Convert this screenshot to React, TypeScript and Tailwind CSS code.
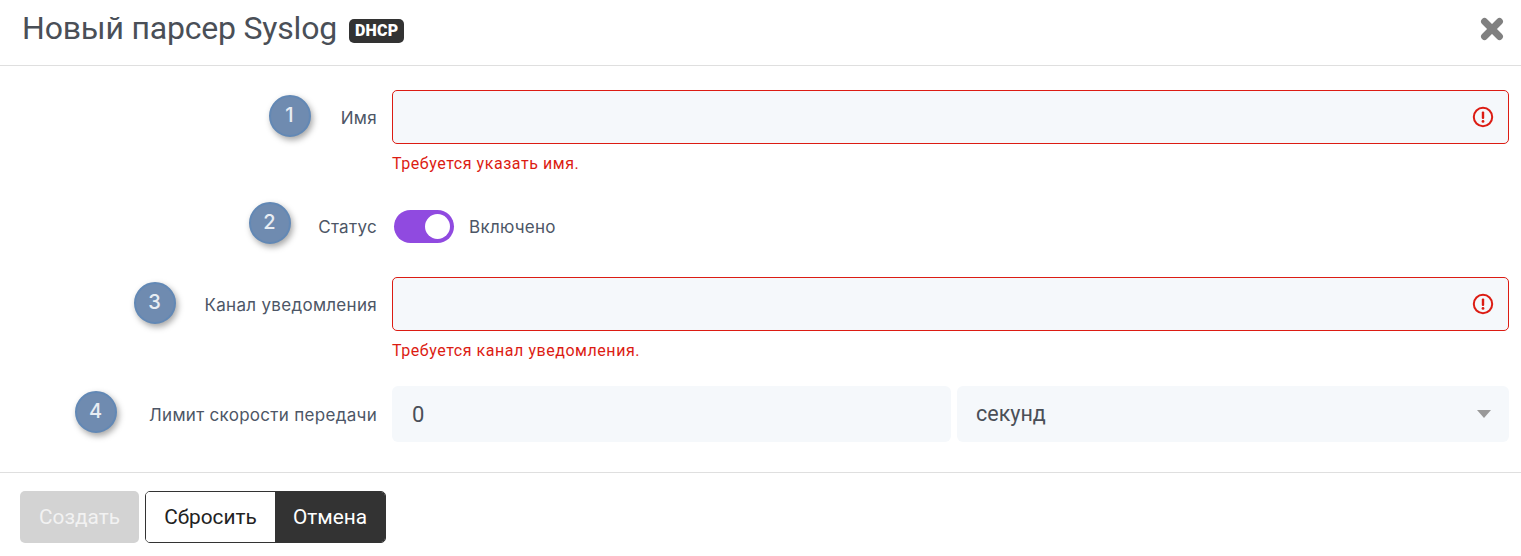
import { X } from 'lucide-react';

function Badge({ n, className }: { n: number; className: string }) {
  return (
    <div
      className={`absolute flex h-[42px] w-[42px] items-center justify-center rounded-full border-2 border-[#6288b5] bg-[#6f8bb0] pb-[2px] pr-[1px] font-['Inter',sans-serif] text-[20px] font-medium text-[#e8edf3] shadow-[2px_3px_6px_rgba(0,0,0,0.35)] ${className}`}
    >
      {n}
    </div>
  );
}

function ErrorIcon() {
  return (
    <svg width="22" height="22" viewBox="0 0 22 22" fill="none">
      <circle cx="11" cy="11" r="9.2" stroke="#dc1c13" strokeWidth="2" />
      <rect x="9.8" y="5.5" width="2.4" height="7.5" rx="1" fill="#dc1c13" />
      <circle cx="11" cy="15.4" r="1.4" fill="#dc1c13" />
    </svg>
  );
}

function Field({ error }: { error: string }) {
  return (
    <div className="flex-1">
      <div className="flex h-[54px] items-center justify-end rounded-[5px] border border-[#dc1c13] bg-[#f5f8fb] pr-[14px]">
        <ErrorIcon />
      </div>
      <p className="mt-[11px] h-[17px] font-['Roboto',sans-serif] text-[16px] leading-[18px] tracking-[0.55px] text-[#dc1c13]">{error}</p>
    </div>
  );
}

function Label({ children }: { children: string }) {
  return (
    <div className="w-[377px] shrink-0 pt-[3px] text-right font-['Inter',sans-serif] text-[17px] tracking-[0.3px] text-[#4d5666]">{children}</div>
  );
}

export default function App() {
  return (
    <div className="h-[556px] w-[1521px] overflow-hidden bg-white font-['Roboto',sans-serif]">
      <header className="flex h-[66px] items-center justify-between border-b border-[#dfdfdf] pb-[8px] pl-[22px] pr-[14px]">
        <div className="flex items-center gap-[12px]">
          <h1 className="pb-[2px] text-[32px] leading-[40px] tracking-[-0.2px] text-[#4a4f57]">Новый парсер Syslog</h1>
          <span className="mt-[4px] rounded-[5px] bg-[#333333] px-[6px] text-[16px] font-black leading-[24px] tracking-[0.2px] text-white">DHCP</span>
        </div>
        <X size={30} strokeWidth={5.5} color="#808080" />
      </header>

      <main className="relative">
        <div className="relative flex items-start pt-[24px]">
          <Badge n={1} className="left-[269px] top-[29px]" />
          <div className="flex h-[54px] items-center"><Label>Имя</Label></div>
          <div className="ml-[15px] mr-[12px] flex-1"><Field error="Требуется указать имя." /></div>
        </div>

        <div className="relative mt-[38px] flex h-[33px] items-center">
          <Badge n={2} className="left-[249px] top-[-8px]" />
          <Label>Статус</Label>
          <div className="ml-[17px] flex h-[33px] w-[60px] items-center justify-end rounded-full bg-[#904ae0] pr-[4px]">
            <div className="h-[25px] w-[25px] rounded-full bg-white" />
          </div>
          <span className="ml-[15px] pt-[3px] font-['Inter',sans-serif] text-[17px] tracking-[0.27px] text-[#4d5666]">Включено</span>
        </div>

        <div className="relative mt-[34px] flex items-start">
          <Badge n={3} className="left-[134px] top-[5px]" />
          <div className="flex h-[54px] items-center"><Label>Канал уведомления</Label></div>
          <div className="ml-[15px] mr-[12px] flex-1"><Field error="Требуется канал уведомления." /></div>
        </div>

        <div className="relative mt-[27px] flex h-[56px] items-center">
          <Badge n={4} className="left-[75px] top-[5px]" />
          <Label>Лимит скорости передачи</Label>
          <div className="ml-[15px] mr-[12px] flex flex-1 gap-[6px]">
            <div className="flex h-[56px] w-[559px] items-center rounded-[6px] bg-[#f5f8fb] pl-[20px] text-[22px] text-[#4a4f57]">0</div>
            <div className="flex h-[56px] flex-1 items-center justify-between rounded-[6px] bg-[#f5f8fb] pl-[19px] pr-[18px] text-[21.5px] text-[#4a4f57]">
              <span>секунд</span>
              <svg width="14" height="8" viewBox="0 0 14 8"><path d="M0 0h14L7 8z" fill="#999999" /></svg>
            </div>
          </div>
        </div>
      </main>

      <footer className="mt-[30px] flex border-t border-[#dfdfdf] pl-[20px] pt-[18px]">
        <button className="h-[52px] w-[119px] rounded-[5px] bg-[#d3d3d3] pt-[2px] text-[20.8px] text-[#f2f2f2]">Создать</button>
        <div className="ml-[6px] flex h-[52px] overflow-hidden rounded-[5px] border border-[#333333] text-[20.8px]">
          <button className="w-[129px] bg-white pt-[2px] text-[#222222]">Сбросить</button>
          <button className="w-[110px] bg-[#333333] pt-[2px] text-white">Отмена</button>
        </div>
      </footer>
    </div>
  );
}
